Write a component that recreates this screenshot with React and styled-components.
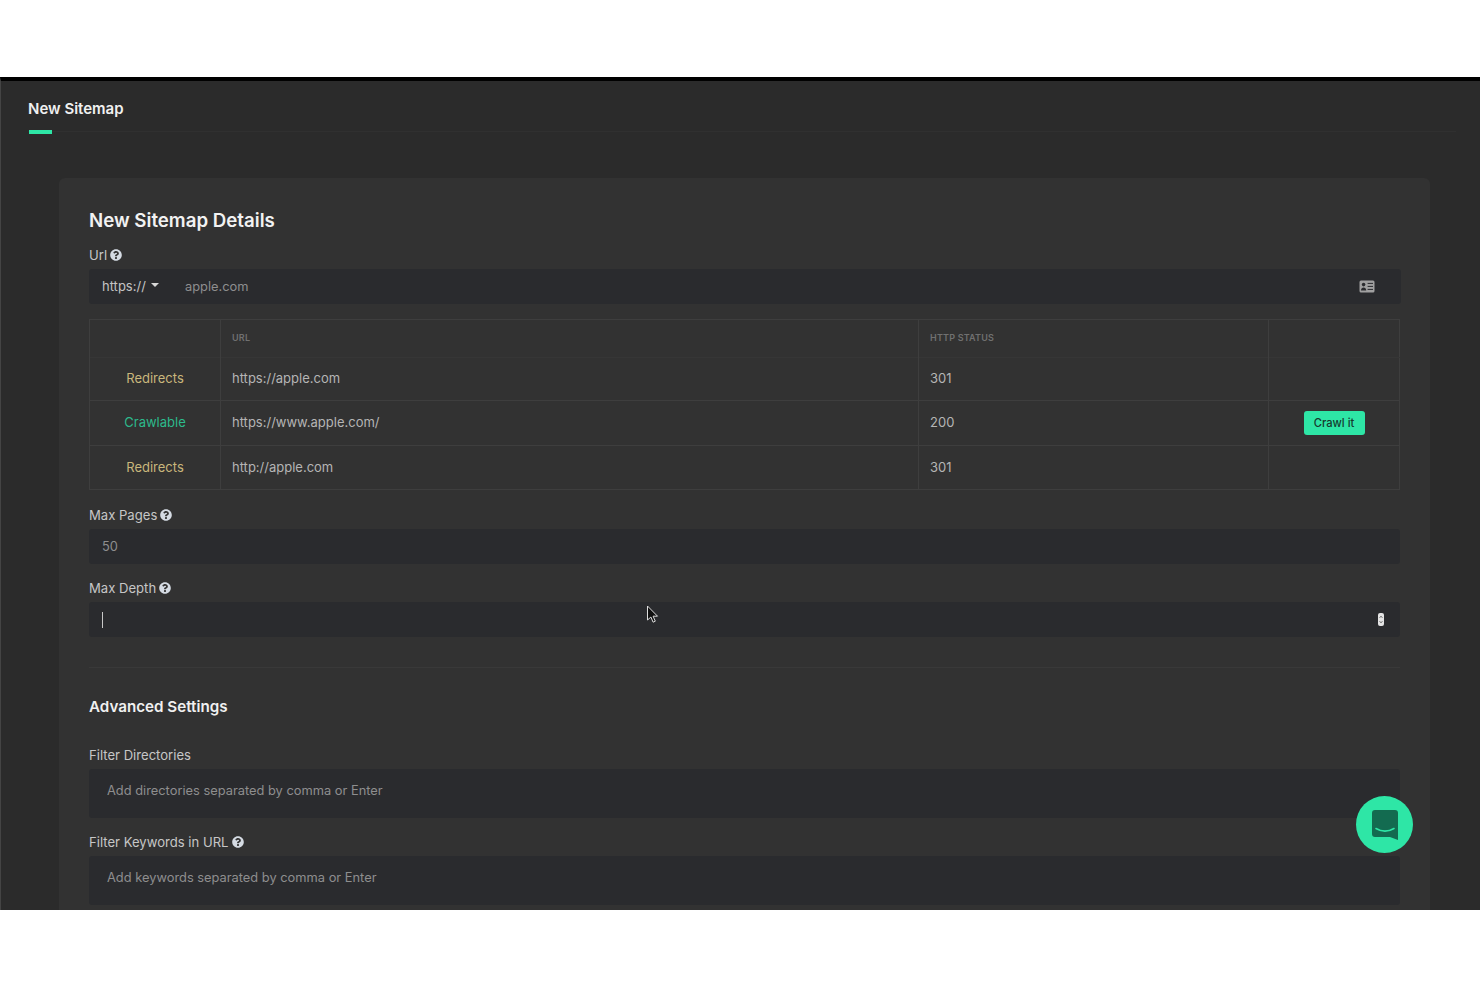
import React from 'react'
import styled, { createGlobalStyle } from 'styled-components'
import { FaQuestionCircle } from 'react-icons/fa'

const GlobalStyle = createGlobalStyle`
  html, body { margin: 0; padding: 0; background: #fff; }
  * { box-sizing: border-box; }
  body { font-family: Inter, "Noto Sans", "Liberation Sans", sans-serif; }
`

const Page = styled.div`
  width: 1480px;
  height: 987px;
  padding-top: 77px;
  background: #fff;
  position: relative;
  overflow: hidden;
`

const Shell = styled.div`
  height: 833px;
  background: #2b2b2b;
  border-top: 4px solid #000;
  border-left: 1px solid #444;
  overflow: hidden;
`

const TabBar = styled.div`
  height: 51px;
  margin: 0 24px 0 27px;
  padding-top: 19px;
  border-bottom: 1px solid #303030;
  position: relative;
`

const TabTitle = styled.div`
  font-size: 15px;
  line-height: 18px;
  font-weight: 600;
  color: #f0f0f0;
`

const TabMark = styled.div`
  position: absolute;
  left: 1px;
  bottom: -3px;
  width: 23px;
  height: 4px;
  background: #2ee6a6;
`

const Card = styled.div`
  width: 1371px;
  height: 760px;
  margin: 46px 0 0 58px;
  padding: 31px 30px 30px;
  background: #323232;
  border-radius: 6px;
`

const CardTitle = styled.h2`
  margin: 0 0 13px;
  font-size: 18.7px;
  line-height: 24px;
  font-weight: 600;
  color: #f2f2f2;
`

const Label = styled.div`
  display: flex;
  align-items: center;
  gap: 3px;
  height: 18px;
  font-size: 13.1px;
  line-height: 18px;
  color: #c6c6c6;
  svg { font-size: 12px; color: #d5dbe3; }
`

const Field = styled.div`
  display: flex;
  align-items: center;
  height: ${(p) => (p.$tall ? '49px' : '35px')};
  margin-top: 5px;
  margin-right: ${(p) => (p.$wide ? '-1px' : '0')};
  padding: ${(p) => (p.$tall ? '0 18px 7px' : '0 16px 0 13px')};
  background: #2a2b2e;
  border-radius: 3px;
`

const Input = styled.input`
  flex: 1;
  min-width: 0;
  height: 100%;
  padding: 0;
  border: none;
  outline: none;
  background: transparent;
  font-family: inherit;
  font-size: 12.85px;
  color: #9a9a9a;
  &::placeholder { color: #8e8e8e; opacity: 1; }
`

const Scheme = styled.div`
  display: flex;
  align-items: center;
  gap: 5px;
  width: 83px;
  margin-top: -1px;
  font-size: 13px;
  color: #c4c4c4;
`

const Caret = styled.span`
  width: 0;
  height: 0;
  margin-top: -2px;
  border-left: 4.5px solid transparent;
  border-right: 4.5px solid transparent;
  border-top: 4px solid #d8d8d8;
`

const TextCaret = styled.span`
  width: 1px;
  height: 16px;
  background: #c8c8c8;
`

const UrlIcon = styled.svg`
  margin-right: 10px;
`

const Table = styled.table`
  width: 1310px;
  margin: 15px 0 16px;
  border-collapse: collapse;
  table-layout: fixed;
  border: 1px solid #3e3e3e;
`

const Th = styled.th`
  height: 38px;
  padding: 0 11px 2px;
  border-left: 1px solid #3e3e3e;
  text-align: left;
  font-size: 9px;
  font-weight: 600;
  letter-spacing: 0.2px;
  color: #707070;
`

const Td = styled.td`
  height: ${(p) => p.$h}px;
  padding: 0 11px 2px;
  border-left: 1px solid #3e3e3e;
  border-top: 1px solid ${(p) => (p.$faint ? '#363636' : '#3e3e3e')};
  font-size: 13px;
  color: #b5b5b5;
`

const StatusCell = styled(Td)`
  text-align: center;
  color: ${(p) => (p.$ok ? '#2dba8c' : '#c9b77c')};
`

const ActionCell = styled(Td)`
  text-align: center;
  padding: 0;
`

const CrawlButton = styled.button`
  width: 61px;
  height: 24px;
  padding: 0;
  border: none;
  border-radius: 3px;
  background: #2ee6a6;
  font-family: inherit;
  font-size: 11.2px;
  font-weight: 500;
  color: #163a2e;
`

const SpacedLabel = styled(Label)`
  margin-top: ${(p) => p.$top}px;
`

const Divider = styled.hr`
  margin: 30px 0 0;
  border: none;
  border-top: 1px solid #393939;
`

const SectionTitle = styled.h3`
  margin: 29px 0 0;
  font-size: 15.2px;
  line-height: 20px;
  font-weight: 600;
  color: #f0f0f0;
`

const Fab = styled.div`
  position: absolute;
  left: 1356px;
  top: 796px;
  width: 57px;
  height: 57px;
  border-radius: 50%;
  background: #2ee6a6;
  display: flex;
  align-items: center;
  justify-content: center;
`

const Cursor = styled.svg`
  position: absolute;
  left: 646px;
  top: 605px;
`

const rows = [
  { status: 'Redirects', url: 'https://apple.com', code: 301, h: 43, faint: true },
  { status: 'Crawlable', url: 'https://www.apple.com/', code: 200, h: 45, ok: true },
  { status: 'Redirects', url: 'http://apple.com', code: 301, h: 44 },
]

const CardIcon = () => (
  <UrlIcon width="16" height="13" viewBox="0 0 16 13">
    <rect x="0.5" y="0.5" width="15" height="12" rx="1.5" fill="#a0a0a0" />
    <circle cx="4.6" cy="4.6" r="1.8" fill="#2a2b2e" />
    <path d="M2 10.4c0-2 1.2-3 2.6-3s2.6 1 2.6 3z" fill="#2a2b2e" />
    <path d="M8.6 3.4h5.4M8.6 6.4h5.4M8.6 9.4h5.4" stroke="#2a2b2e" strokeWidth="1" />
  </UrlIcon>
)

const SpinIcon = () => (
  <svg width="6" height="13" viewBox="0 0 6 13">
    <rect width="6" height="13" rx="2" fill="#e4e4e4" />
    <path d="M1.5 5l1.5-2 1.5 2M1.5 8l1.5 2 1.5-2" fill="none" stroke="#666" strokeWidth="0.8" />
  </svg>
)

const ChatIcon = () => (
  <svg width="26" height="30" viewBox="0 0 26 30">
    <path d="M3 0h20a3 3 0 0 1 3 3v27l-8-3H3a3 3 0 0 1-3-3V3a3 3 0 0 1 3-3z" fill="#136b50" />
    <path d="M4 18.5c5.5 3.2 12.5 3.2 18 0" fill="none" stroke="#2ee6a6" strokeWidth="1.6" strokeLinecap="round" />
  </svg>
)

const App = () => (
  <Page>
    <GlobalStyle />
    <Shell>
      <TabBar>
        <TabTitle>New Sitemap</TabTitle>
        <TabMark />
      </TabBar>
      <Card>
        <CardTitle>New Sitemap Details</CardTitle>
        <Label>Url <FaQuestionCircle /></Label>
        <Field $wide>
          <Scheme>https:// <Caret /></Scheme>
          <Input placeholder="apple.com" readOnly />
          <CardIcon />
        </Field>
        <Table>
          <colgroup>
            <col width="131" />
            <col width="698" />
            <col width="350" />
            <col width="131" />
          </colgroup>
          <thead>
            <tr>
              <Th />
              <Th>URL</Th>
              <Th>HTTP STATUS</Th>
              <Th />
            </tr>
          </thead>
          <tbody>
            {rows.map((row) => (
              <tr key={row.url}>
                <StatusCell $h={row.h} $ok={row.ok} $faint={row.faint}>{row.status}</StatusCell>
                <Td $h={row.h} $faint={row.faint}>{row.url}</Td>
                <Td $h={row.h} $faint={row.faint}>{row.code}</Td>
                <ActionCell $h={row.h} $faint={row.faint}>
                  {row.ok && <CrawlButton>Crawl it</CrawlButton>}
                </ActionCell>
              </tr>
            ))}
          </tbody>
        </Table>
        <Label>Max Pages <FaQuestionCircle /></Label>
        <Field>
          <Input placeholder="50" readOnly />
        </Field>
        <SpacedLabel $top={15}>Max Depth <FaQuestionCircle /></SpacedLabel>
        <Field>
          <TextCaret />
          <Input readOnly />
          <SpinIcon />
        </Field>
        <Divider />
        <SectionTitle>Advanced Settings</SectionTitle>
        <SpacedLabel $top={29}>Filter Directories</SpacedLabel>
        <Field $tall>
          <Input placeholder="Add directories separated by comma or Enter" readOnly />
        </Field>
        <SpacedLabel $top={15}>Filter Keywords in URL <FaQuestionCircle /></SpacedLabel>
        <Field $tall>
          <Input placeholder="Add keywords separated by comma or Enter" readOnly />
        </Field>
      </Card>
    </Shell>
    <Fab><ChatIcon /></Fab>
    <Cursor width="13" height="20" viewBox="0 0 13 20">
      <path d="M1.5 1v14l3.4-3 2.2 5.2 2.2-1-2.2-5h4.4z" fill="#111" stroke="#ddd" strokeWidth="1" />
    </Cursor>
  </Page>
)

export default App
